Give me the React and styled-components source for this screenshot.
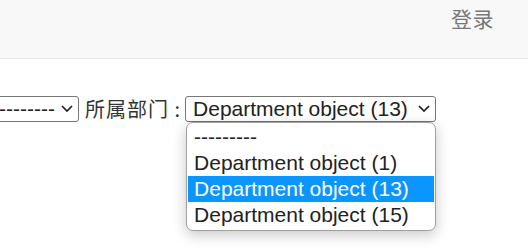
import React from "react";
import styled, { createGlobalStyle } from "styled-components";

const GlobalStyle = createGlobalStyle`
  html, body {
    margin: 0;
    padding: 0;
    background: #fff;
    overflow: hidden;
  }
  body {
    font-family: "Liberation Sans", "Noto Sans CJK SC", Arial, sans-serif;
    color: #333;
  }
`;

const Chevron = () => (
  <svg width="14" height="9" viewBox="0 0 14 9">
    <path d="M2 2 L7 7 L12 2" fill="none" stroke="#222" strokeWidth="1.7" />
  </svg>
);

const App = () => {
  return (
    <Page>
      <GlobalStyle />
      <Navbar>
        <NavLink>登录</NavLink>
      </Navbar>
      <FilterRow>
        <SelectBox width="95px">
          <SelectText>---------</SelectText>
          <Chevron />
        </SelectBox>
        <Label>所属部门 :</Label>
        <SelectWrap>
          <SelectBox width="251px">
            <SelectText>Department object (13)</SelectText>
            <Chevron />
          </SelectBox>
          <Popup>
            <Option>---------</Option>
            <Option>Department object (1)</Option>
            <Option selected>Department object (13)</Option>
            <Option>Department object (15)</Option>
          </Popup>
        </SelectWrap>
      </FilterRow>
    </Page>
  );
};

export default App;

const Page = styled.div`
  width: 528px;
  height: 250px;
  overflow: hidden;
`;

const Navbar = styled.div`
  height: 58px;
  background: #f8f8f8;
  border-bottom: 1px solid #e7e7e7;
  display: flex;
  justify-content: flex-end;
  align-items: flex-start;
  padding-right: 34px;
`;

const NavLink = styled.a`
  font-family: "Noto Sans CJK SC", sans-serif;
  font-size: 21px;
  line-height: 21px;
  margin-top: 8px;
  color: #777;
  letter-spacing: 0.5px;
`;

const FilterRow = styled.div`
  display: flex;
  align-items: center;
  margin-top: 35px;
  margin-left: -16px;
`;

const SelectWrap = styled.div`
  position: relative;
  margin-left: 4px;
`;

const SelectBox = styled.div`
  width: ${({ width }) => width};
  height: 26px;
  box-sizing: border-box;
  border: 1px solid #767676;
  border-radius: 3px;
  background: #fff;
  display: flex;
  align-items: center;
  justify-content: space-between;
  padding: 0 4px 0 7px;
  flex-shrink: 0;
`;

const SelectText = styled.span`
  font-family: "Liberation Sans", Arial, sans-serif;
  font-size: 21px;
  line-height: 24px;
  color: #222;
  white-space: nowrap;
`;

const Label = styled.span`
  font-family: "Noto Sans CJK SC", sans-serif;
  font-size: 20px;
  letter-spacing: 1px;
  margin-left: 6px;
  color: #333;
  white-space: nowrap;
`;

const Popup = styled.div`
  position: absolute;
  top: 26px;
  left: 1px;
  width: 250px;
  box-sizing: border-box;
  border: 1px solid #a0a0a0;
  border-radius: 7px;
  background: #fff;
  box-shadow: 0 4px 14px rgba(0, 0, 0, 0.22);
  overflow: hidden;
  padding: 1px 1px 2px;
`;

const Option = styled.div`
  height: 26px;
  line-height: 26px;
  padding-left: 6px;
  font-family: "Liberation Sans", Arial, sans-serif;
  font-size: 21px;
  white-space: nowrap;
  background: ${({ selected }) => (selected ? "#0a95ff" : "transparent")};
  color: ${({ selected }) => (selected ? "#fff" : "#222")};
`;
